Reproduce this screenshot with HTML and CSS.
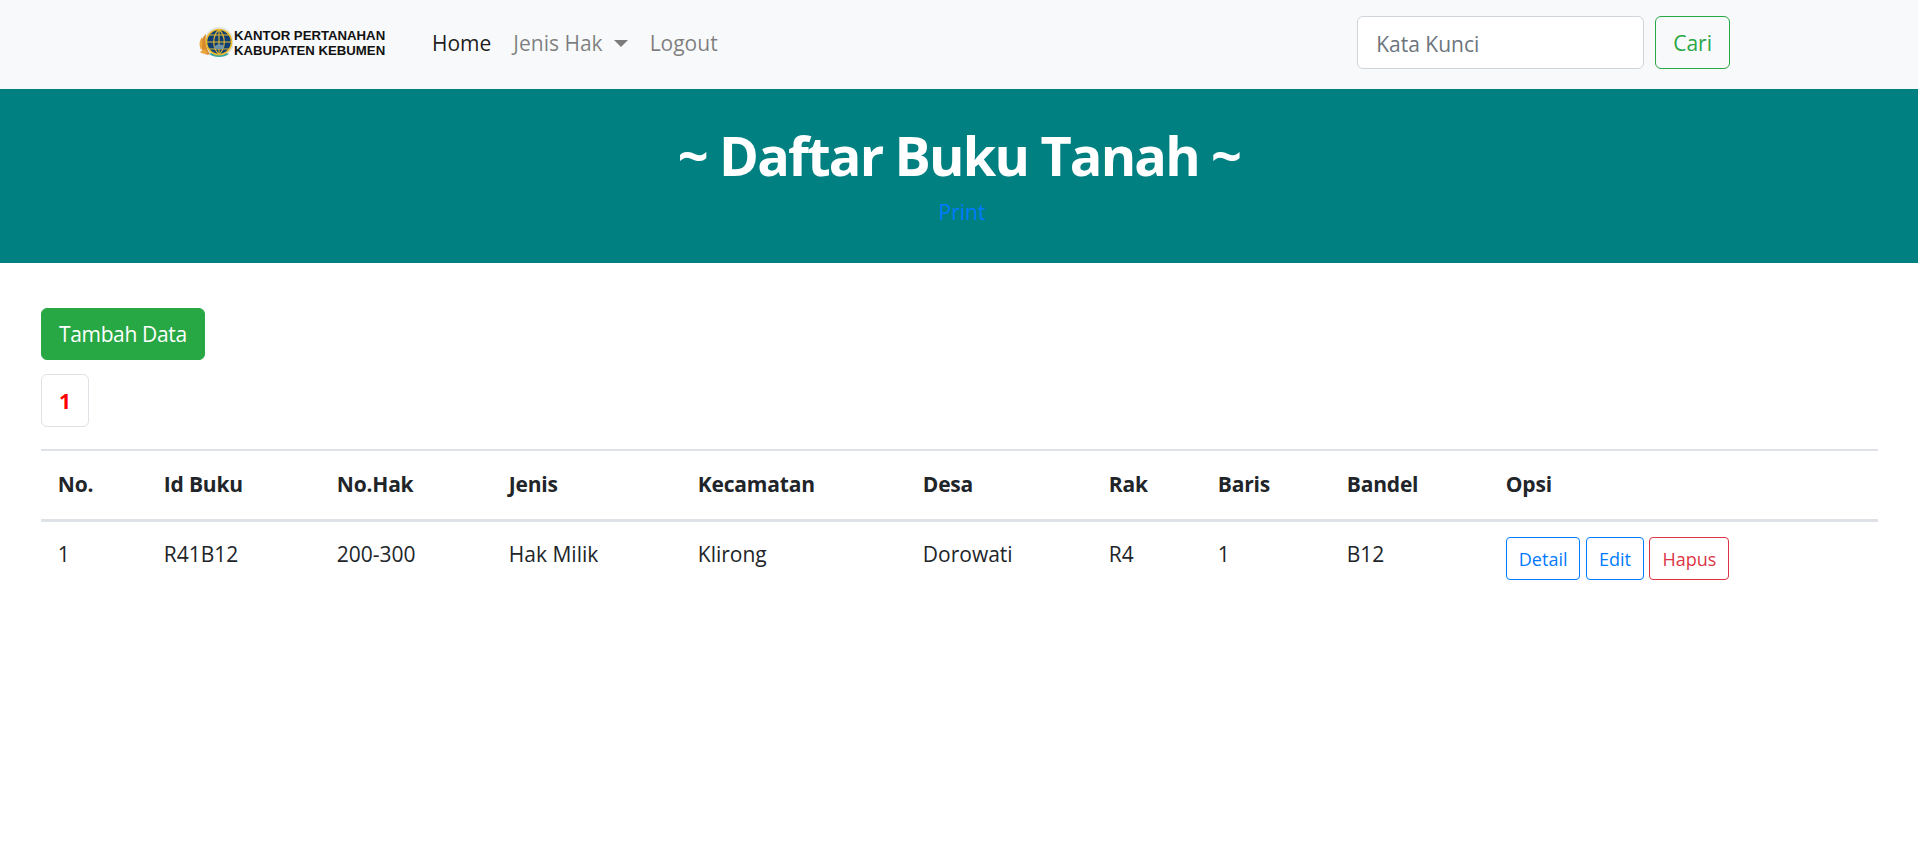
FILE: index.html
```html
<!DOCTYPE html>
<html>
<head lang="en">
    <meta charset="UTF-8">
    <title>Daftar Buku Tanah</title>
    <link rel="stylesheet" href="styles.css">
</head>
<body>
<nav class="navbar">
    <a class="brand" href="#">
        <svg class="brand-logo" width="34" height="34" viewBox="0 0 34 34">
            <circle cx="20" cy="16" r="15" fill="#e4e6e4"/>
            <path d="M7 8C1 13 0 22 6 28c2 1 3 1 5 0-4-5-5-13-4-20z" fill="#d98a2b"/>
            <path d="M3 11C0 15 0 20 2 24c1-4 2-8 1-13zM6 23c-2 1-4 2-5 3 2 2 5 2 8 1z" fill="#eba63c"/>
            <path d="M10 28c5 4 15 4 20 0l-3-1c-4 2-10 2-14 0z" fill="#3fa7a0"/>
            <circle cx="20" cy="16" r="12.5" fill="#0d3f76" stroke="#e8b92c" stroke-width="1.6"/>
            <path d="M20 3.5v25M7.500 16h25M10 9h20M10 23h20M20 3.500c-7 6.500-7 18.500 0 25M20 3.500c7 6.500 7 18.500 0 25" fill="none" stroke="#e8b92c" stroke-width="1.1"/>
            <path d="M15 21l4-3 5 1 1 4h-9z" fill="#6f94a8"/>
        </svg>
        <span class="brand-text">KANTOR PERTANAHAN<br>KABUPATEN KEBUMEN</span>
    </a>
    <ul class="nav-list">
        <li><a class="nav-link active" href="#">Home</a></li>
        <li><a class="nav-link dropdown" href="#">Jenis Hak</a></li>
        <li><a class="nav-link" href="#">Logout</a></li>
    </ul>
    <form class="search">
        <input class="search-input" type="text" placeholder="Kata Kunci">
        <button class="btn btn-outline-green" type="button">Cari</button>
    </form>
</nav>

<div class="jumbotron">
    <h1>~ Daftar Buku Tanah ~</h1>
    <a class="print" href="#">Print</a>
</div>

<div class="content">
    <a class="btn btn-green" href="#">Tambah Data</a>
    <ul class="pagination">
        <li><a class="page-link" href="#">1</a></li>
    </ul>
    <table class="table">
        <thead>
        <tr>
            <th class="c-no">No.</th>
            <th class="c-id">Id Buku</th>
            <th class="c-hak">No.Hak</th>
            <th class="c-jenis">Jenis</th>
            <th class="c-kec">Kecamatan</th>
            <th class="c-desa">Desa</th>
            <th class="c-rak">Rak</th>
            <th class="c-baris">Baris</th>
            <th class="c-bandel">Bandel</th>
            <th>Opsi</th>
        </tr>
        </thead>
        <tbody>
        <tr>
            <td>1</td>
            <td>R41B12</td>
            <td>200-300</td>
            <td>Hak Milik</td>
            <td>Klirong</td>
            <td>Dorowati</td>
            <td>R4</td>
            <td>1</td>
            <td>B12</td>
            <td class="opsi">
                <a class="btn-sm blue" href="#">Detail</a>
                <a class="btn-sm blue" href="#">Edit</a>
                <a class="btn-sm red" href="#">Hapus</a>
            </td>
        </tr>
        </tbody>
    </table>
</div>
</body>
</html>
```
FILE: styles.css
```css
*{
    margin: 0;
    padding: 0;
    box-sizing: border-box;
}
ul{
    list-style: none;
}
a{
    text-decoration: none;
}
body{
    font-family: "Open Sans", "Noto Sans", sans-serif;
    font-size: 21px;
    line-height: 33.6px;
    color: #212529;
    background: #fff;
}

.navbar{
    height: 89px;
    background: #f8f9fa;
    display: flex;
    align-items: center;
    padding: 0 188px 4px 199px;
}
.brand{
    display: flex;
    align-items: center;
    width: 222px;
}
.brand-logo{
    flex: none;
    margin-right: 1px;
}
.brand-text{
    font-family: "Liberation Sans", sans-serif;
    font-weight: bold;
    font-size: 13.2px;
    line-height: 15px;
    color: #111;
    white-space: nowrap;
}
.nav-list{
    display: flex;
    padding-top: 2px;
}
.nav-link{
    display: block;
    padding: 0 11px;
    color: rgba(0,0,0,.5);
}
.nav-link.active{
    color: rgba(0,0,0,.9);
}
.dropdown::after{
    content: "";
    display: inline-block;
    margin-left: 11px;
    vertical-align: 4px;
    border-top: 7px solid;
    border-left: 7px solid transparent;
    border-right: 7px solid transparent;
}
.search{
    display: flex;
    margin-left: auto;
    gap: 11px;
}
.search-input{
    width: 287px;
    height: 53px;
    padding: 2px 18px 0;
    font: inherit;
    color: #495057;
    background: #fff;
    border: 1px solid #ced4da;
    border-radius: 6px;
}
.search-input::placeholder{
    color: #6c757d;
    opacity: 1;
}

.btn{
    display: inline-block;
    font: inherit;
    padding: 9.4px 17px 7.4px;
    border: 1px solid;
    border-radius: 6px;
    background: transparent;
}
.btn-outline-green{
    color: #28a745;
    border-color: #28a745;
}
.btn-green{
    color: #fff;
    background: #28a745;
    border-color: #28a745;
    letter-spacing: -.35px;
}

.jumbotron{
    height: 174px;
    padding-top: 33px;
    background: teal;
    text-align: center;
}
.jumbotron h1{
    font-size: 54px;
    font-weight: 700;
    letter-spacing: -1.8px;
    line-height: 67px;
    color: #fff;
}
.print{
    display: block;
    margin-top: 7px;
    padding-left: 6px;
    color: #007bff;
}

.content{
    padding: 45px 40px 0 41px;
}
.pagination{
    display: flex;
    margin: 14px 0 22px;
}
.page-link{
    display: block;
    width: 48px;
    height: 53px;
    line-height: 53px;
    text-align: center;
    font-weight: bold;
    color: red;
    border: 1px solid #dee2e6;
    border-radius: 6px;
}

.table{
    width: 100%;
    table-layout: fixed;
    border-collapse: collapse;
}
.table th, .table td{
    padding: 16.8px;
    text-align: left;
    vertical-align: top;
}
.table th{
    font-weight: bold;
    letter-spacing: -.2px;
    border-top: 2px solid #dee2e6;
    border-bottom: 3px solid #dee2e6;
}
.table .opsi{
    padding-top: 15.8px;
}
.c-no{width: 106px;}
.c-id{width: 173px;}
.c-hak{width: 172px;}
.c-jenis{width: 189px;}
.c-kec{width: 225px;}
.c-desa{width: 186px;}
.c-rak{width: 109px;}
.c-baris{width: 129px;}
.c-bandel{width: 159px;}

.btn-sm{
    display: inline-block;
    font-size: 18px;
    line-height: 29.4px;
    padding: 6.4px 12px 4.8px;
    border: 1px solid;
    border-radius: 4px;
}
.blue{
    color: #007bff;
}
.red{
    color: #dc3545;
}
```
